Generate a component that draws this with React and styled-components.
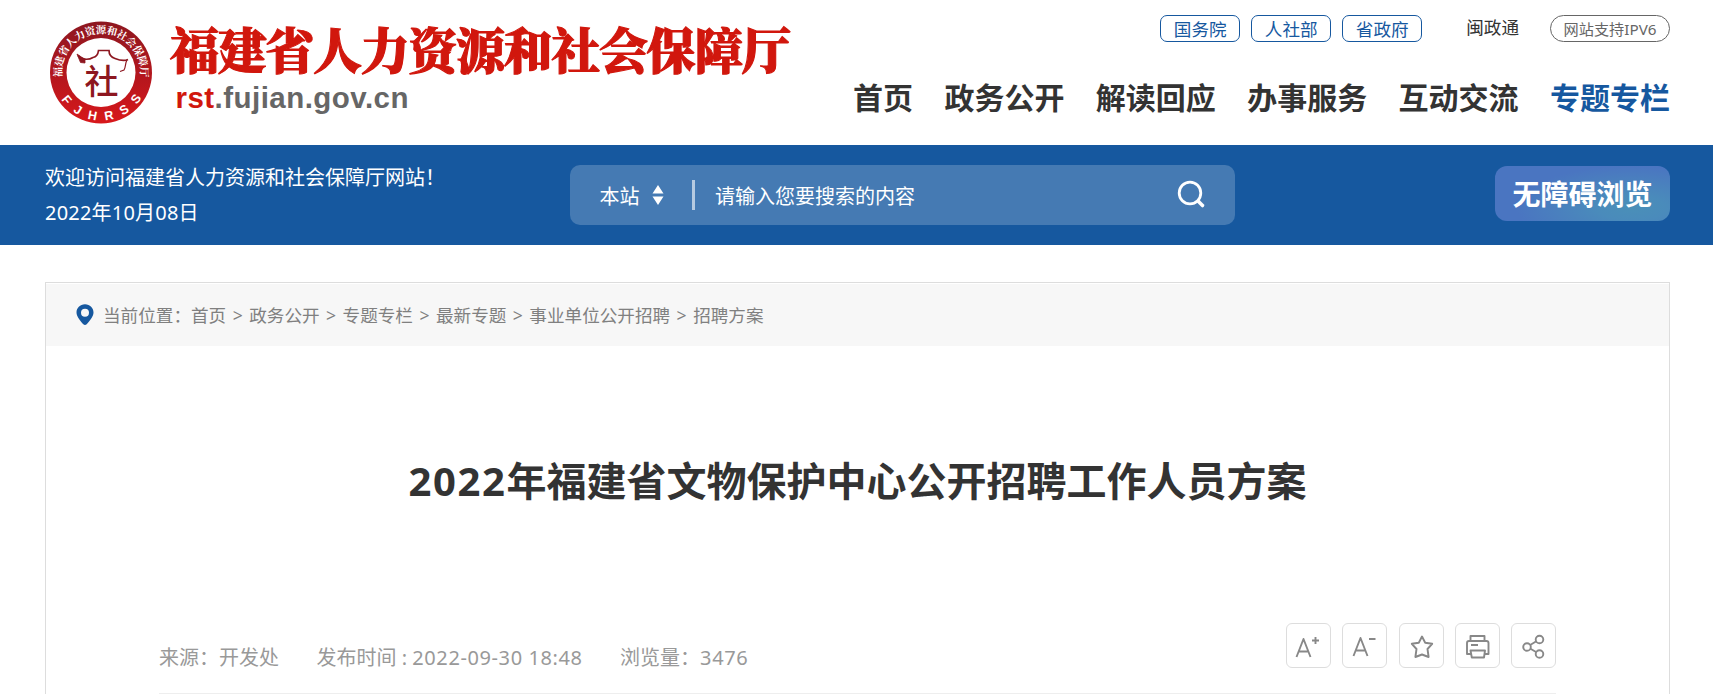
import React from 'react';
import styled, { createGlobalStyle } from 'styled-components';

const GlobalStyle = createGlobalStyle`
  * {
    box-sizing: border-box;
  }
  body {
    margin: 0;
    height: 694px;
    overflow: hidden;
    background: #fff;
    color: #333;
    font-family: "Noto Sans", "Noto Sans CJK SC", sans-serif;
  }
  a {
    color: inherit;
    text-decoration: none;
  }
`;

// shared page width
const Container = styled.div`
  width: 1625px;
  margin-left: 45px;
`;

// header
const Header = styled(Container)`
  display: flex;
  justify-content: space-between;
  height: 145px;
`;
const Logo = styled.svg`
  display: block;
  width: 760px;
  height: 145px;
`;
const HeaderRight = styled.div`
  display: flex;
  flex-direction: column;
  align-items: flex-end;
  padding-top: 15px;
`;
const TopLinks = styled.div`
  display: flex;
  height: 27px;
`;
const Pill = styled.a`
  width: 80px;
  height: 27px;
  margin-right: 11px;
  border: 1px solid #16589f;
  border-radius: 7px;
  color: #16589f;
  font-size: 17.6px;
  line-height: 26px;
  text-align: center;
`;
const TopText = styled.a`
  margin: 0 31px 0 33px;
  font-size: 17.6px;
  line-height: 24px;
`;
const RoundPill = styled(Pill)`
  width: 120px;
  margin-right: 0;
  border-color: #666;
  border-radius: 14px;
  color: #666;
  font-size: 15.2px;
`;
const Nav = styled.nav`
  display: flex;
  gap: 31.4px;
  margin-top: 36px;
  font-size: 30px;
  font-weight: bold;
  line-height: 40px;
`;
const NavItem = styled.a`
  color: ${props => (props.$active ? '#16589f' : '#333')};
`;

// blue bar
const Bar = styled.div`
  height: 100px;
  background: #16589f;
`;
const BarInner = styled(Container)`
  display: flex;
  align-items: flex-start;
  color: #fff;
`;
const Welcome = styled.div`
  width: 525px;
  padding-top: 16px;
  font-size: 20px;
  line-height: 34.5px;
`;
const Search = styled.div`
  display: flex;
  align-items: center;
  width: 665px;
  height: 60px;
  margin-top: 20px;
  padding: 0 28px 0 29.5px;
  border-radius: 10px;
  background: #457ab3;
  font-size: 20px;
`;
const SortIcon = styled.svg`
  width: 12px;
  height: 22px;
  margin-left: 12px;
`;
const Divider = styled.i`
  width: 3px;
  height: 30px;
  margin: 0 20.5px 0 28px;
  background: #b5cae1;
`;
const SearchIcon = styled.svg`
  width: 30px;
  height: 30px;
  margin-left: auto;
`;
const AccessButton = styled.a`
  width: 175px;
  height: 55px;
  margin: 21px 0 0 auto;
  border-radius: 12px;
  background: radial-gradient(ellipse 115px 42px at 78% 76%, #4a8fb8 0%, #4a8bbb 30%, #4a75c1 100%);
  font-size: 28px;
  font-weight: bold;
  line-height: 57px;
  text-align: center;
`;

// article
const Card = styled(Container)`
  height: 412px;
  margin-top: 37px;
  border: 1px solid #ddd;
  border-bottom: 0;
`;
const Crumbs = styled.div`
  display: flex;
  align-items: center;
  height: 63px;
  padding: 0 0 1px 30px;
  border-top: 1px solid #fff;
  background: #f7f7f7;
  color: #808080;
  font-size: 17.6px;
`;
const PinIcon = styled.svg`
  width: 18px;
  height: 21px;
  margin-right: 9px;
`;
const Arrow = styled.span`
  width: 23px;
  font-size: 17.6px;
  text-align: center;
`;
const Title = styled.h1`
  margin: 105px 0 0;
  font-size: 40px;
  line-height: 60px;
  text-align: center;
`;
const Year = styled.span`
  letter-spacing: 1.6px;
`;
const Meta = styled.div`
  display: flex;
  height: 71px;
  margin: 112px 113px 0;
  border-bottom: 1px solid #eee;
  color: #999;
  font-size: 20px;
  line-height: 70px;
`;
const MetaItem = styled.span`
  margin-right: 37.5px;
`;
const Digits = styled.span`
  letter-spacing: ${props => props.$gap || '0.2px'};
`;
const Tools = styled.div`
  display: flex;
  gap: 11.2px;
  margin-left: auto;
`;
const ToolButton = styled.a`
  width: 45px;
  height: 45px;
  border: 1px solid #ddd;
  border-radius: 6px;
  svg {
    display: block;
    width: 43px;
    height: 43px;
    fill: none;
    stroke: #888;
    stroke-width: 1.9;
    stroke-linejoin: round;
  }
`;

const links = ['国务院', '人社部', '省政府'];
const nav = ['首页', '政务公开', '解读回应', '办事服务', '互动交流', '专题专栏'];
const crumbs = ['首页', '政务公开', '专题专栏', '最新专题', '事业单位公开招聘', '招聘方案'];

const SiteLogo = () => (
  <Logo viewBox="45 0 760 145">
    <defs>
      <linearGradient id="seal" x1="0" y1="0" x2="0" y2="1">
        <stop offset="0" stopColor="#8d1720" />
        <stop offset="0.55" stopColor="#b5161d" />
        <stop offset="1" stopColor="#d8181b" />
      </linearGradient>
      <path id="arcTop" d="M62.04 77.97A39.3 39.3 0 1 1 139.96 77.97" />
      <path id="arcBottom" d="M59.4 96.5A48 48 0 0 0 142.6 96.5" />
    </defs>
    <circle cx="101" cy="72.5" r="51" fill="url(#seal)" />
    <circle cx="101" cy="72.5" r="34.5" fill="#fff" />
    <text fill="#fff" fontSize="10.5" fontWeight="700" fontFamily="Noto Serif CJK SC, Noto Sans CJK SC, serif">
      <textPath href="#arcTop" startOffset="0.5" textLength="132.5">福建省人力资源和社会保障厅</textPath>
    </text>
    <text fill="#fff" fontSize="12.5" fontWeight="700" fontFamily="Liberation Sans, sans-serif">
      <textPath href="#arcBottom" startOffset="3.5" textLength="95">FJHRSS</textPath>
    </text>
    {/* roof */}
    <g fill="none" stroke="#8d1720">
      <path d="M78 55.5C81 59.5 88 60.5 93 57.5C96 57 98 54.5 98.5 50.5H109C109 55 112 57.5 115 58.5C120 60.5 124 61.5 128 59.5" strokeWidth="1.7" />
      <path d="M77 54L80.5 62.5L85 63V59.5Z" fill="#8d1720" strokeWidth="0.8" />
      <path d="M127 60C125 63 126 67 124 70L120 71.5" strokeWidth="1.2" />
    </g>
    <text x="84.5" y="94" fill="#8d1720" fontSize="34" fontWeight="500" fontFamily="Noto Sans CJK SC, sans-serif">社</text>
    <text x="170" y="69.3" fill="#d1170d" stroke="#d1170d" strokeWidth="1.1" fontSize="49" fontWeight="900" textLength="621" fontFamily="Noto Serif CJK SC, Noto Sans CJK SC, serif">福建省人力资源和社会保障厅</text>
    <text x="175.5" y="107.5" fill="#666" fontSize="29.5" fontWeight="700" textLength="233" fontFamily="Liberation Sans, sans-serif"><tspan fill="#d1170d">rst</tspan>.fujian.gov.cn</text>
  </Logo>
);

const App = () => (
  <>
    <GlobalStyle />
    <Header as="header">
      <SiteLogo />
      <HeaderRight>
        <TopLinks>
          {links.map(text => <Pill key={text}>{text}</Pill>)}
          <TopText>闽政通</TopText>
          <RoundPill>网站支持IPV6</RoundPill>
        </TopLinks>
        <Nav>
          {nav.map(text => <NavItem key={text} $active={text === '专题专栏'}>{text}</NavItem>)}
        </Nav>
      </HeaderRight>
    </Header>
    <Bar>
      <BarInner>
        <Welcome>
          <div>欢迎访问福建省人力资源和社会保障厅网站！</div>
          <Digits as="div">2022年10月08日</Digits>
        </Welcome>
        <Search>
          <span>本站</span>
          <SortIcon viewBox="0 0 12 22" fill="#fff">
            <path d="M6 1L11.5 9.5H0.5ZM6 21L11.5 12.5H0.5Z" />
          </SortIcon>
          <Divider />
          <span>请输入您要搜索的内容</span>
          <SearchIcon viewBox="0 0 30 30" fill="none" stroke="#fff" strokeLinecap="round">
            <circle cx="13" cy="13" r="10.8" strokeWidth="2.8" />
            <path d="M21.5 21.5L25.5 25.5" strokeWidth="3.6" />
          </SearchIcon>
        </Search>
        <AccessButton>无障碍浏览</AccessButton>
      </BarInner>
    </Bar>
    <Card as="main">
      <Crumbs>
        <PinIcon viewBox="0 0 18 21">
          <path fill="#16589f" fillRule="evenodd" d="M9 0.3C4 0.3 0.5 4 0.5 8.6C0.5 12.5 4.2 17 7.3 20.3Q9 21.5 10.7 20.3C13.8 17 17.5 12.5 17.5 8.6C17.5 4 14 0.3 9 0.3ZM9 4.7A4 4 0 1 1 9 12.7A4 4 0 1 1 9 4.7Z" />
        </PinIcon>
        <span>当前位置：</span>
        {crumbs.map((text, i) => (
          <React.Fragment key={text}>
            {i > 0 && <Arrow>&gt;</Arrow>}
            <a>{text}</a>
          </React.Fragment>
        ))}
      </Crumbs>
      <Title><Year>2022</Year>年福建省文物保护中心公开招聘工作人员方案</Title>
      <Meta>
        <MetaItem>来源：开发处</MetaItem>
        <MetaItem>发布时间 : <Digits $gap="0.6px">2022-09-30 18:48</Digits></MetaItem>
        <MetaItem>浏览量：<Digits $gap="0.6px">3476</Digits></MetaItem>
        <Tools>
          <ToolButton>
            <svg viewBox="0 0 43 43"><path d="M9.5 33L16.5 15L23.5 33M12 27.5H21M25 16.5H32M28.5 13V20" /></svg>
          </ToolButton>
          <ToolButton>
            <svg viewBox="0 0 43 43"><path d="M10.5 32L17.5 14L24.5 32M13 26.5H22M26 15H32.5" /></svg>
          </ToolButton>
          <ToolButton>
            <svg viewBox="0 0 43 43"><path d="M22 12.5L25.2 18.7L32.2 19.8L27.5 25L28.6 33L22 30.5L15.4 33L16.5 25L11.8 19.8L18.8 18.7Z" /></svg>
          </ToolButton>
          <ToolButton>
            <svg viewBox="0 0 43 43">
              <path d="M14.5 16V12H28.5V16M15 30H11V19Q11 17 13 17H30.5Q32.5 17 32.5 19V30H28.5M14.5 26.5H29L28 33.5H15.8ZM15 21H22" />
            </svg>
          </ToolButton>
          <ToolButton>
            <svg viewBox="0 0 43 43">
              <circle cx="27.5" cy="15.5" r="3.8" />
              <circle cx="15" cy="23" r="3.8" />
              <circle cx="27.5" cy="30" r="3.8" />
              <path d="M18.2 21L24.3 17.3M18.5 24.8L24 28" />
            </svg>
          </ToolButton>
        </Tools>
      </Meta>
    </Card>
  </>
);

export default App;
